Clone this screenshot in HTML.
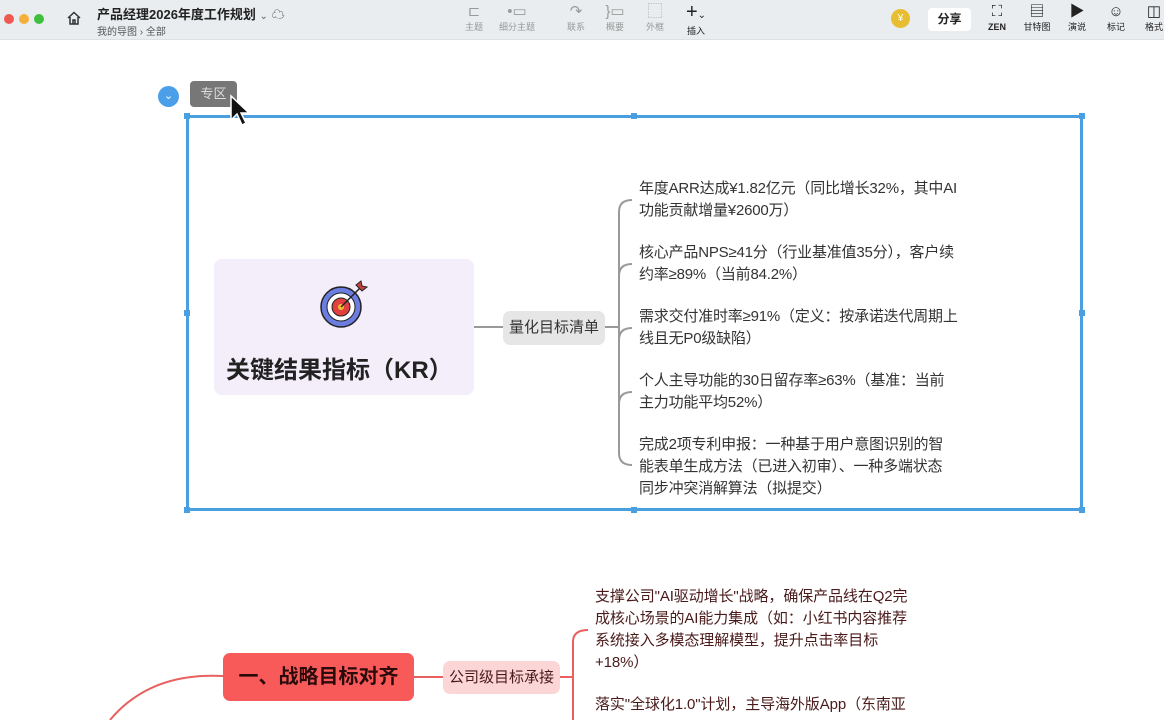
<!DOCTYPE html>
<html><head><meta charset="utf-8"><style>
*{margin:0;padding:0;box-sizing:border-box}
body{width:1164px;height:720px;overflow:hidden;background:#fff;font-family:"Liberation Sans","Noto Sans CJK SC",sans-serif;position:relative}
.a{position:absolute;white-space:nowrap}
.tb{position:absolute;left:0;top:0;width:1164px;height:40px;background:#e9edef;border-bottom:1px solid #dde1e3}
.ic{position:absolute;font-size:9px;color:#999;text-align:center;line-height:12px}
.ic i{font-style:normal;font-size:15px;line-height:18px;display:block}
.it{position:absolute;left:639px;font-size:15px;line-height:22px;color:#333;white-space:nowrap;letter-spacing:-0.2px}
.rt{position:absolute;left:595px;font-size:15px;line-height:22px;color:#4a1a1a;white-space:nowrap;letter-spacing:-0.1px}
.h{position:absolute;width:6px;height:6px;background:#4a9fe0}
</style></head><body>
<div class="tb"></div>
<div class="a" style="left:4px;top:14px;width:10px;height:10px;border-radius:50%;background:#ee5a52"></div>
<div class="a" style="left:19px;top:14px;width:10px;height:10px;border-radius:50%;background:#f4b03a"></div>
<div class="a" style="left:34px;top:14px;width:10px;height:10px;border-radius:50%;background:#3fbf3f"></div>
<svg class="a" style="left:66px;top:10px" width="16" height="16" viewBox="0 0 16 16"><path d="M2 8 L8 2.5 L14 8 M4 7 V14 H12 V7 M7 14 V10 H9 V14" fill="none" stroke="#333" stroke-width="1.5"/></svg>
<div class="a" style="left:97px;top:4px;font-size:13px;font-weight:bold;color:#222">产品经理2026年度工作规划 <span style="font-weight:normal;font-size:10px;color:#666">⌄</span> <span style="font-size:13px;color:#444">☁</span></div>
<div class="a" style="left:97px;top:23px;font-size:10px;color:#555">我的导图 › 全部</div>
<div class="ic" style="left:463px;top:3px;width:22px"><i>⊏</i>主题</div>
<div class="ic" style="left:497px;top:3px;width:40px"><i>•▭</i>细分主题</div>
<div class="ic" style="left:565px;top:3px;width:22px"><i>↷</i>联系</div>
<div class="ic" style="left:604px;top:3px;width:22px"><i>}▭</i>概要</div>
<div class="ic" style="left:644px;top:3px;width:22px"><i>⬚</i>外框</div>
<div class="ic" style="left:678px;top:3px;width:36px;color:#222"><i style="font-size:20px">+<span style="font-size:10px">⌄</span></i>插入</div>
<div class="a" style="left:891px;top:9px;width:19px;height:19px;border-radius:50%;background:#e7bd32;color:#fff;font-size:10px;text-align:center;line-height:19px">¥</div>
<div class="a" style="left:928px;top:8px;width:43px;height:23px;background:#fff;border-radius:4px;font-size:12px;font-weight:bold;text-align:center;line-height:23px;color:#222">分享</div>
<div class="ic" style="left:985px;top:3px;width:24px;color:#222"><i>⛶</i><b>ZEN</b></div>
<div class="ic" style="left:1022px;top:3px;width:30px;color:#222"><i>▤</i>甘特图</div>
<div class="ic" style="left:1065px;top:3px;width:24px;color:#222"><i>▶</i>演说</div>
<div class="ic" style="left:1104px;top:3px;width:24px;color:#222"><i>☺</i>标记</div>
<div class="ic" style="left:1142px;top:3px;width:24px;color:#222"><i>◫</i>格式</div>

<svg class="a" style="left:0;top:0" width="1164" height="720">
<rect x="187.5" y="116.5" width="894" height="393" fill="none" stroke="#4a9fe0" stroke-width="3"/>
<line x1="474" y1="327" x2="503" y2="327" stroke="#999" stroke-width="2"/>
<line x1="605" y1="327" x2="618" y2="327" stroke="#999" stroke-width="2"/>
<g fill="none" stroke="#999" stroke-width="2">
<path d="M632 200 Q619 200 619 212 V453 Q619 465 632 465"/>
<path d="M619 276 Q619 264 632 264"/><path d="M619 340 Q619 328 632 328"/><path d="M619 404 Q619 392 632 392"/>
</g>
<path d="M110 720 Q150 672 223 676" fill="none" stroke="#e86060" stroke-width="2"/>
<line x1="414" y1="677" x2="443" y2="677" stroke="#e86060" stroke-width="2"/>
<g fill="none" stroke="#e86060" stroke-width="2"><path d="M560 677 H573"/><path d="M588 630 Q573 630 573 642 V720"/></g>
</svg>
<div class="h" style="left:184px;top:113px"></div><div class="h" style="left:631px;top:113px"></div><div class="h" style="left:1079px;top:113px"></div>
<div class="h" style="left:184px;top:310px"></div><div class="h" style="left:1079px;top:310px"></div>
<div class="h" style="left:184px;top:507px"></div><div class="h" style="left:631px;top:507px"></div><div class="h" style="left:1079px;top:507px"></div>

<div class="a" style="left:158px;top:86px;width:21px;height:21px;border-radius:50%;background:#4a9fe8;color:#fff;text-align:center;font-size:11px;line-height:21px">⌄</div>
<div class="a" style="left:190px;top:81px;width:47px;height:26px;background:#777;border-radius:4px;color:#ddd;font-size:13px;text-align:center;line-height:26px">专区</div>
<svg class="a" style="left:229px;top:94px" width="26" height="36" viewBox="0 0 26 36"><path d="M2 2 V26 L8 20 L13 31 L17 29 L12 19 H20 Z" fill="#111" stroke="#fff" stroke-width="1.5"/></svg>

<div class="a" style="left:214px;top:259px;width:260px;height:136px;background:#f3eefa;border-radius:8px"></div>
<svg class="a" style="left:318px;top:280px" width="50" height="50" viewBox="0 0 50 50">
<circle cx="23" cy="27" r="20" fill="#6b7ee0" stroke="#222" stroke-width="1.5"/>
<circle cx="23" cy="27" r="14" fill="#fff" stroke="#222" stroke-width="1"/>
<circle cx="23" cy="27" r="9" fill="#e04040" stroke="#222" stroke-width="1"/>
<circle cx="23" cy="27" r="3" fill="#f0c030"/>
<line x1="23" y1="27" x2="43" y2="7" stroke="#222" stroke-width="1.5"/>
<path d="M38 5 L43 1 L44 6 L49 7 L44 11 Z" fill="#c84040" stroke="#222" stroke-width="1"/>
</svg>
<div class="a" style="left:226px;top:350px;font-size:24px;font-weight:bold;color:#222">关键结果指标（KR）</div>
<div class="a" style="left:503px;top:311px;width:102px;height:34px;background:#e6e6e6;border-radius:7px;font-size:15px;color:#333;text-align:center;line-height:34px">量化目标清单</div>

<div class="it" style="top:178px">年度ARR达成¥1.82亿元（同比增长32%，其中AI<br>功能贡献增量¥2600万）</div>
<div class="it" style="top:242px">核心产品NPS≥41分（行业基准值35分），客户续<br>约率≥89%（当前84.2%）</div>
<div class="it" style="top:306px">需求交付准时率≥91%（定义：按承诺迭代周期上<br>线且无P0级缺陷）</div>
<div class="it" style="top:370px">个人主导功能的30日留存率≥63%（基准：当前<br>主力功能平均52%）</div>
<div class="it" style="top:434px">完成2项专利申报：一种基于用户意图识别的智<br>能表单生成方法（已进入初审）、一种多端状态<br>同步冲突消解算法（拟提交）</div>

<div class="a" style="left:223px;top:653px;width:191px;height:48px;background:#f85a5a;border-radius:7px;font-size:20px;font-weight:bold;color:#2a0a0a;text-align:center;line-height:48px">一、战略目标对齐</div>
<div class="a" style="left:443px;top:661px;width:117px;height:33px;background:#fcd6d6;border-radius:7px;font-size:15px;color:#4a1a1a;text-align:center;line-height:33px">公司级目标承接</div>
<div class="rt" style="top:586px">支撑公司"AI驱动增长"战略，确保产品线在Q2完<br>成核心场景的AI能力集成（如：小红书内容推荐<br>系统接入多模态理解模型，提升点击率目标<br>+18%）</div>
<div class="rt" style="top:694px">落实"全球化1.0"计划，主导海外版App（东南亚</div>
</body></html>
